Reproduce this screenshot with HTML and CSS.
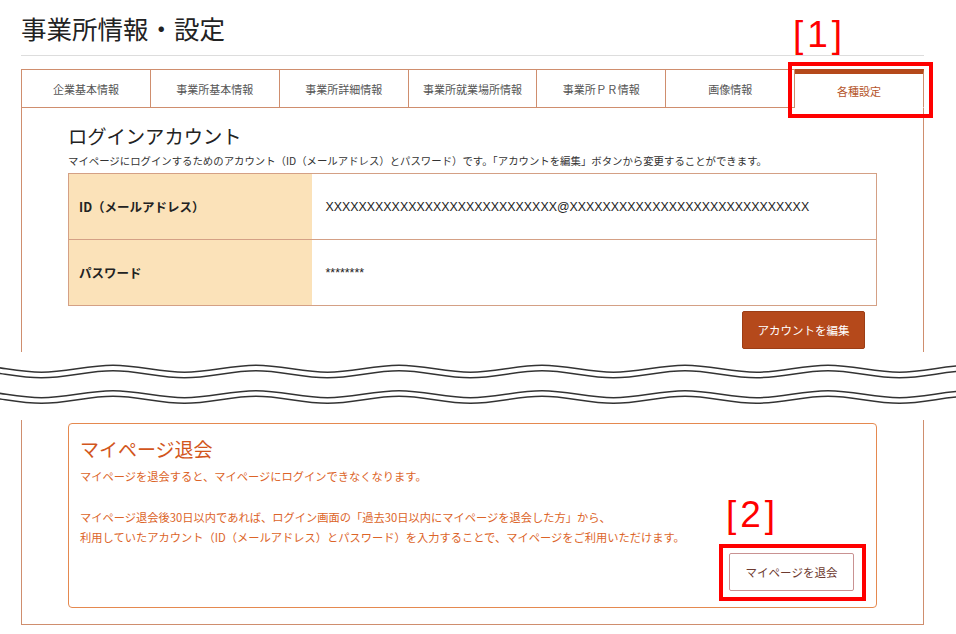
FILE: index.html
```html
<!DOCTYPE html>
<html lang="ja">
<head>
    <meta charset="UTF-8">
    <meta name="viewport" content="width=device-width, initial-scale=1.0">
    <title>事業所情報・設定</title>
    <link rel="stylesheet" href="styles.css">
</head>
<body>
    <div class="page">
        <h1 class="page-title">事業所情報・設定</h1>

        <ul class="tabs">
            <li class="tab">企業基本情報</li>
            <li class="tab">事業所基本情報</li>
            <li class="tab">事業所詳細情報</li>
            <li class="tab">事業所就業場所情報</li>
            <li class="tab">事業所ＰＲ情報</li>
            <li class="tab">画像情報</li>
            <li class="tab active">各種設定</li>
        </ul>

        <div class="panel panel-top">
            <h2 class="section-title">ログインアカウント</h2>
            <p class="section-desc">マイページにログインするためのアカウント（ID（メールアドレス）とパスワード）です。「アカウントを編集」ボタンから変更することができます。</p>
            <table class="account-table">
                <tr>
                    <th>ID（メールアドレス）</th>
                    <td class="mail">XXXXXXXXXXXXXXXXXXXXXXXXXXXX@XXXXXXXXXXXXXXXXXXXXXXXXXXXXX</td>
                </tr>
                <tr>
                    <th>パスワード</th>
                    <td class="pass">********</td>
                </tr>
            </table>
            <div class="btn-row">
                <button class="btn-edit">アカウントを編集</button>
            </div>
        </div>

        <svg class="cut" width="956" height="68" viewBox="0 0 956 68">
            <defs>
                <path id="wave" d="M-30 16 C-4.3 16 15.8 23 41.5 23 S87.3 16 113 16 S158.8 23 184.5 23 S230.3 16 256 16 S301.8 23 327.5 23 S373.3 16 399 16 S444.8 23 470.5 23 S516.3 16 542 16 S587.8 23 613.5 23 S659.3 16 685 16 S730.8 23 756.5 23 S802.3 16 828 16 S873.8 23 899.5 23 S945.3 16 971 16"/>
            </defs>
            <g fill="none">
                <use href="#wave" stroke="#333" stroke-width="7"/>
                <use href="#wave" stroke="#fff" stroke-width="4"/>
                <use href="#wave" transform="translate(0 25.5)" stroke="#333" stroke-width="7"/>
                <use href="#wave" transform="translate(0 25.5)" stroke="#fff" stroke-width="4"/>
            </g>
        </svg>

        <div class="panel panel-bottom">
            <div class="withdraw-box">
                <div class="withdraw-text">
                    <h3>マイページ退会</h3>
                    <p>マイページを退会すると、マイページにログインできなくなります。</p>
                    <p class="gap">マイページ退会後30日以内であれば、ログイン画面の「過去30日以内にマイページを退会した方」から、<br>利用していたアカウント（ID（メールアドレス）とパスワード）を入力することで、マイページをご利用いただけます。</p>
                </div>
                <button class="btn-withdraw">マイページを退会</button>
            </div>
        </div>

        <!-- annotations -->
        <span class="note-label note-label-1">[1]</span>
        <div class="note-box note-box-1"></div>
        <span class="note-label note-label-2">[2]</span>
        <div class="note-box note-box-2"></div>
    </div>
</body>
</html>
```

FILE: styles.css
```css
body {
    margin: 0;
    background: #fff;
    color: #333;
    font-family: "Noto Sans CJK JP", sans-serif;
}
.page {
    position: relative;
    width: 903px;
    padding: 12px 0 0 21px;
}
.page-title {
    margin: 0;
    padding-bottom: 11px;
    border-bottom: 1px solid #ddd;
    font-size: 25.5px;
    font-weight: normal;
    line-height: 32px;
    color: #222;
}

/* tabs */
.tabs {
    display: flex;
    margin: 13px 0 0;
    padding: 0;
    list-style: none;
}
.tab {
    flex: 1;
    height: 39px;
    box-sizing: border-box;
    display: flex;
    align-items: center;
    justify-content: center;
    border: 1px solid #cf8e6e;
    border-left: none;
    font-size: 11px;
    color: #555;
}
.tab:first-child {
    border-left: 1px solid #cf8e6e;
}
.tab.active {
    border-top: 5px solid #b5491b;
    border-bottom-color: #fff;
    color: #b5542a;
}

/* panel */
.panel {
    border-left: 1px solid #cf8e6e;
    border-right: 1px solid #cf8e6e;
}
.panel-top {
    padding: 16px 46px 3px;
}
.section-title {
    margin: 0;
    font-size: 19.3px;
    font-weight: normal;
    line-height: 24px;
    color: #222;
}
.section-desc {
    margin: 5px 0 0;
    font-size: 10.4px;
    line-height: 16px;
    color: #333;
    white-space: nowrap;
}
.account-table {
    width: 100%;
    margin-top: 4px;
    border-collapse: collapse;
    border: 1px solid #d4a085;
}
.account-table tr {
    height: 66px;
}
.account-table th {
    width: 243px;
    padding: 0 0 0 10px;
    box-sizing: border-box;
    background: #fbe2b9;
    border-bottom: 1px solid #d4a085;
    text-align: left;
    font-size: 12.5px;
    font-weight: bold;
    color: #222;
}
.account-table td {
    padding: 0 0 0 14px;
    border-bottom: 1px solid #d4a085;
    font-family: "Liberation Sans", sans-serif;
    font-size: 12.4px;
    color: #222;
}
.btn-row {
    display: flex;
    justify-content: flex-end;
    padding-right: 12px;
    margin-top: 5px;
}
.btn-edit {
    width: 123px;
    height: 38px;
    background: #b5491b;
    border: 1px solid #9c3d15;
    border-radius: 2px;
    color: #fff;
    font-family: inherit;
    font-size: 11.5px;
}

.cut {
    display: block;
    margin-left: -21px;
}

.panel-bottom {
    padding: 3px 46px 16px;
    border-bottom: 1px solid #cf8e6e;
}
.withdraw-box {
    display: flex;
    justify-content: space-between;
    height: 185px;
    box-sizing: border-box;
    padding: 13px 22px 16px 11px;
    border: 1px solid #e5894f;
    border-radius: 4px;
}
.withdraw-text h3 {
    margin: 0;
    font-size: 19px;
    font-weight: normal;
    line-height: 24px;
    color: #d2561c;
}
.withdraw-text p {
    margin: 5px 0 0;
    font-size: 11.25px;
    line-height: 20px;
    color: #dc6428;
    white-space: nowrap;
}
.withdraw-text p.gap {
    margin-top: 21px;
}
.btn-withdraw {
    align-self: flex-end;
    width: 125px;
    height: 38px;
    background: #fff;
    border: 1px solid #c99292;
    border-radius: 2px;
    color: #6e3a30;
    font-family: inherit;
    font-size: 11.5px;
}

/* red annotations */
.note-label {
    position: absolute;
    font-family: "Liberation Sans", sans-serif;
    font-size: 37px;
    line-height: 37px;
    letter-spacing: 4px;
    color: #f00;
}
.note-label-1 {
    left: 793px;
    top: 16px;
}
.note-label-2 {
    left: 726px;
    top: 496px;
}
.note-box {
    position: absolute;
    border: 4px solid #f00;
    box-sizing: border-box;
}
.note-box-1 {
    left: 788px;
    top: 62px;
    width: 145px;
    height: 56px;
}
.note-box-2 {
    left: 719px;
    top: 544px;
    width: 147px;
    height: 57px;
}
```
